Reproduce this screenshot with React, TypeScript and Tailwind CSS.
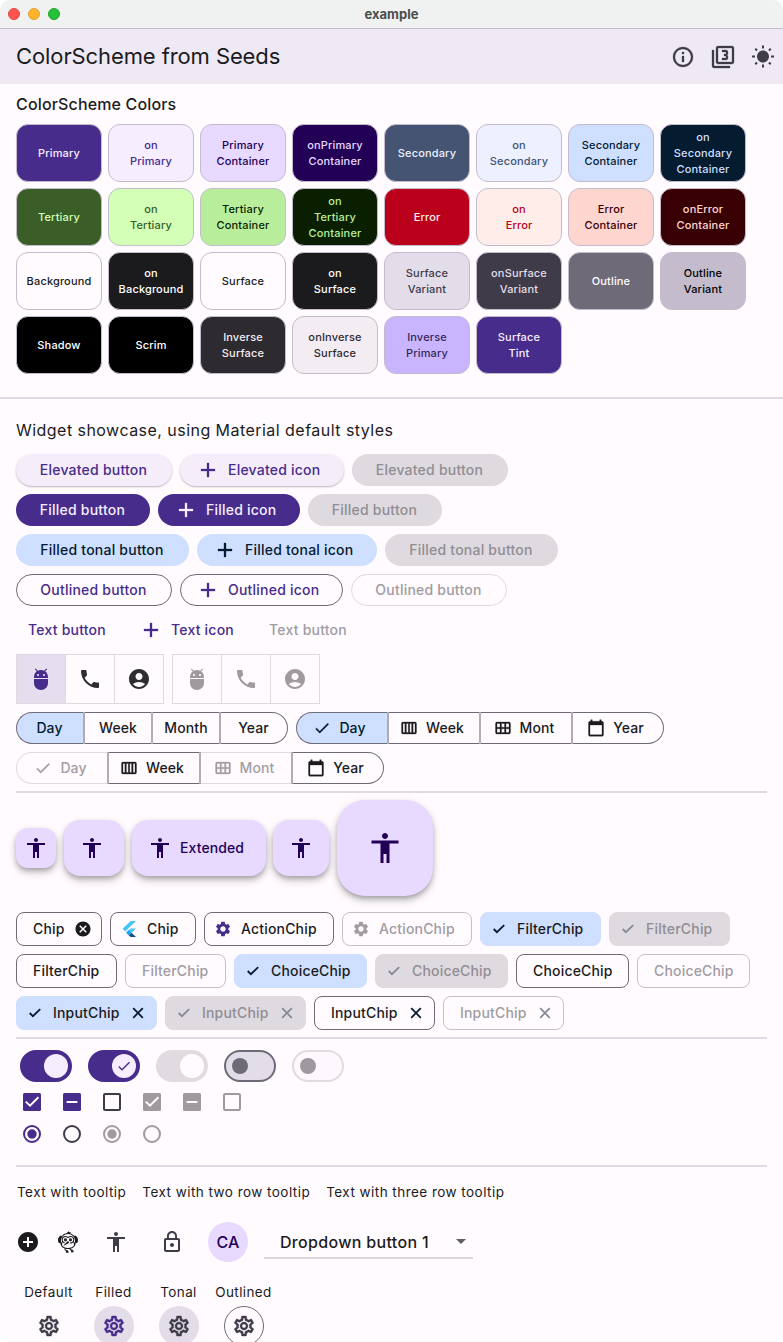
import type { ReactNode } from "react";
import clsx from "clsx";
import {
  MdAccessibility,
  MdAccountCircle,
  MdAdb,
  MdAdd,
  MdAddCircle,
  MdArrowDropDown,
  MdCalendarToday,
  MdCalendarViewMonth,
  MdCalendarViewWeek,
  MdCancel,
  MdCheck,
  MdFlutterDash,
  MdLockOutline,
  MdOutlineFilter3,
  MdOutlineInfo,
  MdOutlineSettings,
  MdPhone,
  MdSettings,
  MdWbSunny,
} from "react-icons/md";

const swatches: [string, string][] = [
  ["Primary", "bg-[#472c8c] text-[#f6eeff]"],
  ["on\nPrimary", "bg-[#f6eeff] text-[#472c8c]"],
  ["Primary\nContainer", "bg-[#e7d9ff] text-[#220056]"],
  ["onPrimary\nContainer", "bg-[#220056] text-[#e7d9ff]"],
  ["Secondary", "bg-[#445472] text-[#ecf0ff]"],
  ["on\nSecondary", "bg-[#ecf0ff] text-[#445472]"],
  ["Secondary\nContainer", "bg-[#cfdfff] text-[#041b30]"],
  ["on\nSecondary\nContainer", "bg-[#041b30] text-[#cfdfff]"],
  ["Tertiary", "bg-[#3b5e29] text-[#d3ffb7]"],
  ["on\nTertiary", "bg-[#d3ffb7] text-[#3b5e29]"],
  ["Tertiary\nContainer", "bg-[#b8ee9b] text-[#0a1f00]"],
  ["on\nTertiary\nContainer", "bg-[#0a1f00] text-[#b8ee9b]"],
  ["Error", "bg-[#ba001b] text-[#ffede9]"],
  ["on\nError", "bg-[#ffede9] text-[#ba001b]"],
  ["Error\nContainer", "bg-[#ffd5d0] text-[#390004]"],
  ["onError\nContainer", "bg-[#390004] text-[#ffd5d0]"],
  ["Background", "bg-[#fffbff] text-[#1b1b1d]"],
  ["on\nBackground", "bg-[#1b1b1d] text-[#fffbff]"],
  ["Surface", "bg-[#fffbff] text-[#1b1b1d]"],
  ["on\nSurface", "bg-[#1b1b1d] text-[#fffbff]"],
  ["Surface\nVariant", "bg-[#e3dce9] text-[#403b48]"],
  ["onSurface\nVariant", "bg-[#403b48] text-[#e3dce9]"],
  ["Outline", "bg-[#6f6a78] text-[#fffbff]"],
  ["Outline\nVariant", "bg-[#c4bccc] text-black"],
  ["Shadow", "bg-black text-white"],
  ["Scrim", "bg-black text-white"],
  ["Inverse\nSurface", "bg-[#2d2a30] text-[#f3ecf2]"],
  ["onInverse\nSurface", "bg-[#f3ecf2] text-[#2d2a30]"],
  ["Inverse\nPrimary", "bg-[#c9b4ff] text-[#33285a]"],
  ["Surface\nTint", "bg-[#472c8c] text-[#f6eeff]"],
];

function Button({ cls, icon, children }: { cls: string; icon?: boolean; children: ReactNode }) {
  return (
    <div
      className={clsx(
        "flex h-8 items-center gap-2 rounded-full tracking-[0.22px]",
        !icon && "justify-center pr-px",
        cls,
      )}
    >
      {icon && (
        <MdAdd size={24} stroke="currentColor" strokeWidth={0.3} className="shrink-0 [&>path[fill=none]]:hidden" />
      )}
      <span className="whitespace-nowrap">{children}</span>
    </div>
  );
}

function Toggles({ disabled }: { disabled?: boolean }) {
  return (
    <div
      className={clsx(
        "flex h-[50px] w-[148px] divide-x divide-[#dedae0] border border-[#dedae0] [&>div]:flex [&>div]:flex-1 [&>div]:items-center [&>div]:justify-center",
        disabled ? "text-[#9f9aa0]" : "text-[#2f2d31]",
      )}
    >
      <div className={disabled ? "" : "bg-[#e5deee] text-[#472c8c]"}><MdAdb size={24} /></div>
      <div><MdPhone size={24} /></div>
      <div><MdAccountCircle size={24} /></div>
    </div>
  );
}

const monthIcons = [MdCheck, MdCalendarViewWeek, MdCalendarViewMonth, MdCalendarToday];

function Segments({ labels, icons, partial }: { labels: string[]; icons?: boolean; partial?: boolean }) {
  return (
    <div className="flex h-8">
      {labels.map((label, i) => {
        const Icon = monthIcons[i];
        const off = partial && i % 2 === 0;
        return (
          <div
            key={label}
            className={clsx(
              "relative flex items-center justify-center gap-2 border-y",
              icons ? "w-[92px]" : "w-[68px]",
              icons && (i === 0 && !partial ? "pr-1.5" : "pr-1"),
              !icons && i === 0 && "pr-0.5",
              off ? "border-[#dfdbe1] text-[#a29ea4]" : "border-[#6f6a78] text-[#1b1b1d]",
              i === 0 && "rounded-l-full border-l",
              i === 3 && "rounded-r-full border-r",
              i === 0 && !partial && "bg-[#cfdfff] !text-[#041b30]",
            )}
          >
            {i > 0 && <i className="absolute -left-px -top-px h-8 w-0.5 bg-[#b0abb5]" />}
            {icons && <Icon size={18} stroke="currentColor" strokeWidth={0.4} className="shrink-0 [&>path[fill=none]]:hidden" />}
            <span>{label}</span>
          </div>
        );
      })}
    </div>
  );
}

function Fab({ cls, children, size = 24 }: { cls: string; children?: ReactNode; size?: number }) {
  return (
    <div
      className={clsx(
        "flex items-center gap-2 bg-[#e7d9ff] text-[#220056] shadow-[0_3px_5px_-1px_rgba(0,0,0,0.24),0_5px_8px_rgba(0,0,0,0.16),0_1px_10px_rgba(0,0,0,0.06)]",
        cls,
      )}
    >
      <MdAccessibility size={size} className="shrink-0" />
      {children}
    </div>
  );
}

function FlutterLogo() {
  return (
    <svg width="18" height="18" viewBox="0 0 18 18" className="shrink-0">
      <path d="M10.8 1h5.2L5.3 11.3 2.6 8.7z" fill="#43c4fc" />
      <path d="M10.8 8.4H16l-4.5 4.3-2.8-2.5z" fill="#43c4fc" />
      <path d="M6 12.7 8.7 10l2.8 2.7-2.8 2.6z" fill="#1aa5f0" />
      <path d="M8.7 15.3l2.8-2.6L16 17h-5.4z" fill="#0b5296" />
    </svg>
  );
}

type ChipProps = { cls: string; lead?: ReactNode; trail?: ReactNode; look?: "line" | "off" | "on" | "fill"; children: ReactNode };

function Chip({ cls, lead, trail, look = "line", children }: ChipProps) {
  return (
    <div
      className={clsx(
        "flex h-[34px] items-center gap-[9px] rounded-lg border tracking-[0.18px]",
        look === "line" && "border-[#6f6a78] text-[#1b1b1d]",
        look === "off" && "border-[#c4c0c7] text-[#a09ca2]",
        look === "on" && "border-[#cfdfff] bg-[#cfdfff] text-[#1b1b1d]",
        look === "fill" && "border-[#dedae0] bg-[#dedae0] text-[#918d93]",
        lead ? "pl-[9px]" : "pl-4",
        trail ? "pr-[9px]" : "pr-4",
        cls,
      )}
    >
      {lead}
      <span className="flex-1 whitespace-nowrap">{children}</span>
      {trail}
    </div>
  );
}

function ChipIcon({ d, color }: { d: string; color: string }) {
  return (
    <svg width="18" height="18" viewBox="0 0 18 18" fill="none" stroke="currentColor" strokeWidth="1.8" className={clsx("shrink-0", color)}>
      <path d={d} />
    </svg>
  );
}

const checkPath = "M3.7 9 6.9 12.2 14.2 5.2";
const closePath = "M4.2 4.2 13.8 13.8M13.8 4.2 4.2 13.8";
const check = <ChipIcon d={checkPath} color="text-[#041b30]" />;
const checkOff = <ChipIcon d={checkPath} color="text-[#858a98]" />;
const close = <ChipIcon d={closePath} color="text-[#041b30]" />;
const closeOff = <ChipIcon d={closePath} color="text-[#858a98]" />;

function Switch({ track, thumb, children }: { track: string; thumb: string; children?: ReactNode }) {
  return (
    <div className={clsx("flex h-8 w-[52px] items-center rounded-full border-2", track)}>
      <div className={clsx("flex items-center justify-center rounded-full", thumb)}>{children}</div>
    </div>
  );
}

function Checkbox({ color, mark }: { color: string; mark?: "check" | "dash" }) {
  return (
    <svg width="18" height="18" viewBox="0 0 18 18" fill="none" className={color}>
      {mark ? <rect width="18" height="18" rx="1.5" fill="currentColor" /> : <rect x="1" y="1" width="16" height="16" rx="1" stroke="currentColor" strokeWidth="2" />}
      {mark === "check" && <path d="M2.8 8.6 7 12.7 15.4 4.3" stroke="#fffbff" strokeWidth="2" />}
      {mark === "dash" && <path d="M3.6 9h10.8" stroke="#fffbff" strokeWidth="2" />}
    </svg>
  );
}

function Radio({ color, on }: { color: string; on?: boolean }) {
  return (
    <svg width="18" height="18" viewBox="0 0 18 18" fill="none" className={color}>
      <circle cx="9" cy="9" r="8" stroke="currentColor" strokeWidth="2" />
      {on && <circle cx="9" cy="9" r="4.7" fill="currentColor" />}
    </svg>
  );
}

function Divider({ cls }: { cls: string }) {
  return <div className={clsx("h-0.5 bg-[#dfdae3]", cls)} />;
}

const iconButtons: [string, string][] = [
  ["Default", "text-[#403b48]"],
  ["Filled", "bg-[#e3dce9] text-[#472c8c]"],
  ["Tonal", "bg-[#e3dce9] text-[#403b48]"],
  ["Outlined", "border border-[#6f6a78] text-[#403b48]"],
];

export default function App() {
  return (
    <div className="h-[1342px] w-[783px] overflow-hidden rounded-[10px] bg-[#fffbff] font-['Inter',sans-serif] text-sm font-medium tracking-[0.1px] text-[#1b1b1d]">
      <div className="relative flex h-[29px] items-center justify-center border-b border-[#c4bccc] bg-[#eff2f1] text-[13px] font-bold tracking-normal text-[#4b4d4c]">
        <div className="absolute left-2 flex gap-2">
          <i className="size-3 rounded-full border border-[#e14640] bg-[#ff5550]" />
          <i className="size-3 rounded-full border border-[#dea035] bg-[#ffb429]" />
          <i className="size-3 rounded-full border border-[#1aa62c] bg-[#24c138]" />
        </div>
        example
      </div>
      <header className="flex h-[55px] items-center bg-[#eee9f4] pl-4 pr-2">
        <h1 className="flex-1 text-[22px] font-normal tracking-[-0.1px]">ColorScheme from Seeds</h1>
        <div className="flex gap-4 text-[#403b48]">
          <MdOutlineInfo size={24} stroke="currentColor" strokeWidth={0.3} className="[&>path[fill=none]]:hidden" />
          <MdOutlineFilter3 size={24} stroke="currentColor" strokeWidth={0.3} className="[&>path[fill=none]]:hidden" />
          <MdWbSunny size={24} />
        </div>
      </header>

      <h2 className="flex h-10 items-center pl-4 text-base font-medium tracking-[0.15px]">ColorScheme Colors</h2>
      <div className="ml-4 grid w-[730px] grid-cols-8 gap-1.5">
        {swatches.map(([name, cls]) => (
          <div
            key={name}
            className={clsx(
              "flex h-[58px] items-center justify-center whitespace-pre rounded-xl border border-[#c4bccc] text-center text-[11px] leading-4 tracking-[0.15px]",
              cls,
            )}
          >
            {name}
          </div>
        ))}
      </div>

      <Divider cls="mt-[23px]" />
      <div className="px-4">
        <h2 className="flex h-[55px] items-center pt-[7px] text-base font-normal tracking-[0.46px]">
          Widget showcase, using Material default styles
        </h2>
        <div className="flex flex-col gap-2">
          <div className="flex gap-2 text-[#472c8c]">
            <Button cls="w-[156px] bg-[#f5eefa] shadow-[0_1px_2px_rgba(0,0,0,0.28)]">Elevated button</Button>
            <Button icon cls="w-[164px] bg-[#f5eefa] pl-4 shadow-[0_1px_2px_rgba(0,0,0,0.28)]">Elevated icon</Button>
            <Button cls="w-[156px] bg-[#dedae0] text-[#918d93]">Elevated button</Button>
          </div>
          <div className="flex gap-2">
            <Button cls="w-[134px] bg-[#472c8c] text-[#f6eeff]">Filled button</Button>
            <Button icon cls="w-[142px] bg-[#472c8c] pl-4 text-[#f6eeff]">Filled icon</Button>
            <Button cls="w-[134px] bg-[#dedae0] text-[#918d93]">Filled button</Button>
          </div>
          <div className="flex gap-2">
            <Button cls="w-[173px] bg-[#cfdfff] text-[#041b30]">Filled tonal button</Button>
            <Button icon cls="w-[180px] bg-[#cfdfff] pl-4 text-[#041b30]">Filled tonal icon</Button>
            <Button cls="w-[173px] bg-[#dedae0] text-[#918d93]">Filled tonal button</Button>
          </div>
          <div className="flex gap-2">
            <Button cls="w-[156px] border border-[#6f6a78] text-[#472c8c]">Outlined button</Button>
            <Button icon cls="w-[163px] border border-[#6f6a78] pl-[15px] text-[#472c8c]">Outlined icon</Button>
            <Button cls="w-[156px] border border-[#dedae0] text-[#a09ca2]">Outlined button</Button>
          </div>
          <div className="flex gap-2">
            <Button cls="w-[103px] text-[#472c8c]">Text button</Button>
            <Button icon cls="w-[122px] pl-3 text-[#472c8c]">Text icon</Button>
            <Button cls="w-[103px] text-[#a09ca2]">Text button</Button>
          </div>
          <div className="flex gap-2">
            <Toggles />
            <Toggles disabled />
          </div>
          <div className="flex gap-2">
            <Segments labels={["Day", "Week", "Month", "Year"]} />
            <Segments icons labels={["Day", "Week", "Mont", "Year"]} />
          </div>
          <Segments icons partial labels={["Day", "Week", "Mont", "Year"]} />
        </div>

        <Divider cls="my-[7px]" />
        <div className="flex h-24 items-center gap-2">
          <Fab cls="h-10 w-10 justify-center rounded-xl" />
          <Fab cls="h-14 w-[60px] rounded-2xl pl-4" />
          <Fab cls="h-14 w-[134px] rounded-2xl pl-4">Extended</Fab>
          <Fab cls="ml-[-1px] h-14 w-14 justify-center rounded-2xl" />
          <Fab cls="h-24 w-24 justify-center rounded-[28px]" size={36} />
        </div>

        <div className="mt-4 flex flex-col gap-2">
          <div className="flex gap-2">
            <Chip cls="w-[86px]" trail={<MdCancel size={18} className="shrink-0" />}>Chip</Chip>
            <Chip cls="w-[86px]" lead={<FlutterLogo />}>Chip</Chip>
            <Chip cls="w-[130px]" lead={<MdSettings size={18} className="shrink-0 text-[#472c8c]" />}>ActionChip</Chip>
            <Chip look="off" cls="w-[130px]" lead={<MdSettings size={18} className="shrink-0" />}>ActionChip</Chip>
            <Chip look="on" cls="w-[121px]" lead={check}>FilterChip</Chip>
            <Chip look="fill" cls="w-[121px]" lead={checkOff}>FilterChip</Chip>
          </div>
          <div className="flex gap-2">
            <Chip cls="w-[101px]">FilterChip</Chip>
            <Chip look="off" cls="w-[101px]">FilterChip</Chip>
            <Chip look="on" cls="w-[133px]" lead={check}>ChoiceChip</Chip>
            <Chip look="fill" cls="w-[133px]" lead={checkOff}>ChoiceChip</Chip>
            <Chip cls="w-[113px]">ChoiceChip</Chip>
            <Chip look="off" cls="w-[113px]">ChoiceChip</Chip>
          </div>
          <div className="flex gap-2">
            <Chip look="on" cls="w-[141px]" lead={check} trail={close}>InputChip</Chip>
            <Chip look="fill" cls="w-[141px]" lead={checkOff} trail={closeOff}>InputChip</Chip>
            <Chip cls="w-[121px]" trail={close}>InputChip</Chip>
            <Chip look="off" cls="w-[121px]" trail={closeOff}>InputChip</Chip>
          </div>
        </div>

        <Divider cls="mt-[7px]" />
        <div className="mt-[11px] flex gap-4 pl-1">
          <Switch track="justify-end border-[#472c8c] bg-[#472c8c] pr-0.5" thumb="size-6 bg-[#f6eeff]" />
          <Switch track="justify-end border-[#472c8c] bg-[#472c8c] pr-0.5" thumb="size-6 bg-[#f6eeff] text-[#472c8c]">
            <MdCheck size={16} />
          </Switch>
          <Switch track="justify-end border-[#dfdbe0] bg-[#dfdbe0] pr-0.5" thumb="size-6 bg-[#fffbff]" />
          <Switch track="border-[#6f6a78] bg-[#e3dce9] pl-1.5" thumb="size-4 bg-[#6f6a78]" />
          <Switch track="border-[#dfdbe0] bg-[#fcf8fd] pl-1.5" thumb="size-4 bg-[#9e999e]" />
        </div>
        <div className="mt-[11px] flex gap-[22px] pl-[7px]">
          <Checkbox color="text-[#472c8c]" mark="check" />
          <Checkbox color="text-[#472c8c]" mark="dash" />
          <Checkbox color="text-[#403b48]" />
          <Checkbox color="text-[#9f9aa0]" mark="check" />
          <Checkbox color="text-[#9f9aa0]" mark="dash" />
          <Checkbox color="text-[#9f9aa0]" />
        </div>
        <div className="mt-3.5 flex gap-[22px] pl-[7px]">
          <Radio color="text-[#472c8c]" on />
          <Radio color="text-[#403b48]" />
          <Radio color="text-[#9f9aa0]" on />
          <Radio color="text-[#9f9aa0]" />
        </div>

        <Divider cls="mt-[22px]" />
        <div className="flex h-[50px] items-center gap-4 pt-0.5 pl-px text-[13.5px] font-normal tracking-[0.46px]">
          <span>Text with tooltip</span>
          <span>Text with two row tooltip</span>
          <span>Text with three row tooltip</span>
        </div>
        <div className="flex h-[50px] items-center">
          <MdAddCircle size={24} />
          <MdFlutterDash size={24} className="ml-4" />
          <MdAccessibility size={24} className="ml-6 text-[#403b48]" />
          <MdLockOutline size={24} className="ml-8 text-[#403b48]" />
          <div className="ml-6 flex size-10 items-center justify-center rounded-full bg-[#e7d9ff] text-base text-[#220056]">CA</div>
          <div className="ml-4 flex h-[34px] w-[209px] items-center justify-between border-b-2 border-[#dad6db] pl-4 text-base tracking-[0.32px]">
            <span className="pt-0.5">Dropdown button 1</span>
            <MdArrowDropDown size={24} className="text-[#5f5f61]" />
          </div>
        </div>
        <div className="mt-[15px] flex">
          {iconButtons.map(([name, cls]) => (
            <div key={name} className="flex w-[65px] flex-col items-center gap-1">
              <span className="text-[13.5px] leading-5 font-normal tracking-[0.4px]">{name}</span>
              <div className={clsx("flex size-10 items-center justify-center rounded-full", cls)}>
                <MdOutlineSettings size={24} stroke="currentColor" strokeWidth={0.4} className="[&>path[fill=none]]:hidden" />
              </div>
            </div>
          ))}
        </div>
      </div>
    </div>
  );
}
